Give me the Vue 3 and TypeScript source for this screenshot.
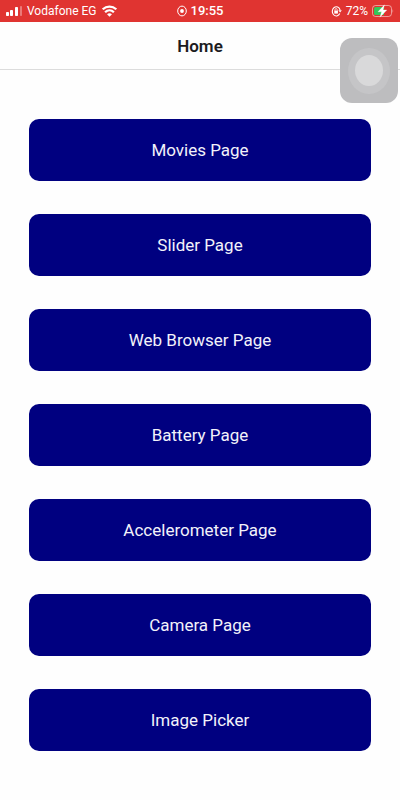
<script setup lang="ts">
interface PageLink {
  id: string
  label: string
}

const pages: PageLink[] = [
  { id: 'movies', label: 'Movies Page' },
  { id: 'slider', label: 'Slider Page' },
  { id: 'browser', label: 'Web Browser Page' },
  { id: 'battery', label: 'Battery Page' },
  { id: 'accelerometer', label: 'Accelerometer Page' },
  { id: 'camera', label: 'Camera Page' },
  { id: 'image', label: 'Image Picker' },
]
</script>

<template>
  <div class="screen">
    <div class="status">
      <div class="side">
        <svg class="signal" width="16" height="10" viewBox="0 0 16 10" fill="#fff">
          <rect x="0" y="6" width="3" height="4" rx="0.8" />
          <rect x="4" y="4" width="3" height="6" rx="0.8" />
          <rect x="9" y="1" width="3" height="9" rx="0.8" />
          <rect x="14" y="0" width="2" height="10" rx="0.8" opacity="0.35" />
        </svg>
        <span>Vodafone EG</span>
        <svg width="15" height="12" viewBox="0 0 14 12" preserveAspectRatio="none" fill="none" stroke="#fff" stroke-width="2.1">
          <path d="M0.7 4.4C4.2 0.7 9.8 0.7 13.3 4.4" />
          <path d="M2.9 7.2C5.3 4.8 8.7 4.8 11.1 7.2" />
          <path d="M4.7 9.2C6.1 7.9 7.9 7.9 9.3 9.2L7 11.8Z" fill="#fff" stroke="none" />
        </svg>
      </div>
      <div class="clock">
        <svg width="10" height="12" viewBox="0 0 10 12">
          <ellipse cx="5" cy="6" rx="4.3" ry="4.9" fill="none" stroke="#fff" stroke-width="1" />
          <ellipse cx="5" cy="6" rx="1.9" ry="2.1" fill="#fff" />
        </svg>
        <span>19:55</span>
      </div>
      <div class="side end">
        <svg width="11" height="12" viewBox="0 0 11 12" fill="none" stroke="#fff">
          <path d="M8.8 8.6A4 4.6 0 1 1 9.1 5" stroke-width="1.1" />
          <path d="M7.4 5.2H10.8L9.1 7.6Z" fill="#fff" stroke="none" />
          <rect x="3.3" y="5.6" width="3.6" height="3" fill="#fff" stroke="none" />
          <path d="M4 5.8V4.6C4 3.2 6.2 3.2 6.2 4.6V5.8" stroke-width="0.8" />
        </svg>
        <span class="percent">72%</span>
        <svg width="22" height="14" viewBox="0 0 22 14">
          <rect x="0.5" y="1.5" width="19" height="11" rx="3" fill="none" stroke="#fff" stroke-opacity="0.5" />
          <path d="M3.5 3H12V11H3.5Q2 11 2 9.5V4.5Q2 3 3.5 3Z" fill="#35c759" />
          <path d="M20.5 5Q22 7 20.5 9Z" fill="#fff" opacity="0.5" />
          <path d="M12.5 0.8L6 7.8H9.600L8 13.2L14.800 6H11Z" fill="#fff" stroke="#fff" stroke-width="0.3" />
        </svg>
      </div>
    </div>

    <header class="header">
      <h1>Home</h1>
      <button class="assist" type="button" aria-label="AssistiveTouch">
        <span class="ring"><span class="dot"></span></span>
      </button>
    </header>

    <main class="list">
      <button v-for="page in pages" :key="page.id" class="page-button" type="button">
        {{ page.label }}
      </button>
    </main>
  </div>
</template>

<style>
body {
  margin: 0;
  background: #fefefe;
}
</style>

<style scoped>
.screen {
  min-height: 100vh;
  box-sizing: border-box;
  background: #fefefe;
  font-family: Roboto, "Liberation Sans", sans-serif;
}

.status {
  display: grid;
  grid-template-columns: 1fr auto 1fr;
  align-items: center;
  height: 22px;
  padding: 0 6px;
  background: #e03431;
  color: #fff;
  font-size: 12px;
  line-height: 22px;
}

.status svg {
  flex: none;
}

.side,
.clock {
  display: flex;
  align-items: center;
  gap: 5px;
  white-space: nowrap;
}

.end {
  justify-content: flex-end;
  gap: 4px;
}

.clock {
  gap: 4px;
  font-size: 13px;
  font-weight: 500;
}

.header {
  position: relative;
  display: flex;
  align-items: center;
  justify-content: center;
  height: 47px;
  border-bottom: 1px solid #dcdcdc;
}

h1 {
  margin: 0;
  color: #1c1c1e;
  font-size: 17px;
  font-weight: 600;
  line-height: 24px;
}

.assist {
  position: absolute;
  top: 16px;
  right: 2px;
  display: grid;
  place-items: center;
  width: 58px;
  height: 65px;
  padding: 0;
  border: 0;
  border-radius: 12px;
  background: #bdbdbf;
}

.ring {
  display: grid;
  place-items: center;
  width: 42px;
  height: 46px;
  border-radius: 50%;
  background: #c5c5c7;
}

.dot {
  width: 28px;
  height: 31px;
  border-radius: 50%;
  background: #d9d9da;
}

.list {
  display: flex;
  flex-direction: column;
  gap: 33px;
  padding: 49px 29px;
}

.page-button {
  height: 62px;
  padding: 0 16px;
  border: 0;
  border-radius: 10px;
  background: #000080;
  color: #f2f2fa;
  font-family: inherit;
  font-size: 17px;
  font-weight: 400;
  line-height: 24px;
}
</style>
